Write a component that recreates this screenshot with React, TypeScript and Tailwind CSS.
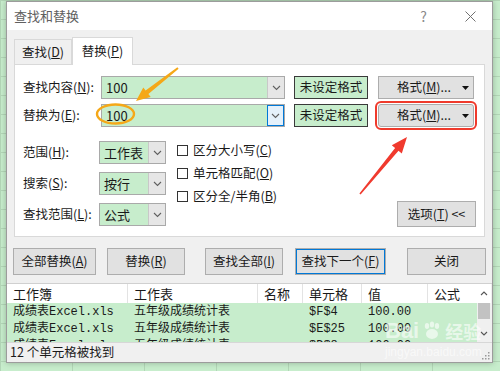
import React from "react";

const ui = { fontFamily: '"Noto Sans CJK SC", "Noto Sans", sans-serif' };
const mono = { fontFamily: '"Liberation Mono", "Noto Sans CJK SC", monospace' };

function Chevron() {
  return (
    <svg width="9" height="6" viewBox="0 0 9 6">
      <path d="M1 1 L4.5 4.5 L8 1" fill="none" stroke="#606060" strokeWidth="1.1" />
    </svg>
  );
}

function Combo({ value, width, focus }: { value: string; width: string; focus?: boolean }) {
  return (
    <div className={`flex h-full ${width} border border-[#a9a9a9] bg-[#c7edcc]`}>
      <div className="flex-1 flex items-center pl-[4px] text-[13px] text-[#1a1a1a]">{value}</div>
      <div
        className={`w-[17px] flex items-center justify-center ${
          focus ? "border border-[#0078d7] bg-[#e5f1fb]" : "border-l border-[#c8c8c8] bg-[#e6e6e6]"
        }`}
      >
        <Chevron />
      </div>
    </div>
  );
}

function Btn({ children, className }: { children: React.ReactNode; className?: string }) {
  return (
    <div
      className={`flex items-center justify-center border border-[#adadad] bg-[#e1e1e1] text-[12.5px] text-[#1a1a1a] ${className}`}
    >
      {children}
    </div>
  );
}

function FormatBtn({ marked }: { marked?: boolean }) {
  return (
    <div
      className={`relative flex items-center justify-center w-[96px] h-[23px] border border-[#adadad] bg-[#e1e1e1] text-[12.5px] text-[#1a1a1a] ${
        marked ? "outline-2 outline-offset-[1px] outline-[#ef3a2c] rounded-[3px]" : ""
      }`}
    >
      <span className="ml-[-4px]">
        格式(<u>M</u>)...
      </span>
      <svg className="absolute right-[4px] top-[9px]" width="7" height="4" viewBox="0 0 7 4">
        <path d="M0 0 H7 L3.5 4 Z" fill="#111" />
      </svg>
    </div>
  );
}

function Check({ children }: { children: React.ReactNode }) {
  return (
    <div className="flex items-center h-[23px] text-[12.5px] text-[#1a1a1a]">
      <div className="w-[11px] h-[11px] border border-[#333] bg-white mr-[5px]" />
      {children}
    </div>
  );
}

const cols = ["w-[121px]", "w-[130px]", "w-[45px]", "w-[59px]", "w-[66px]", "w-[49px]"];

const rows = [
  ["成绩表Excel.xls", "五年级成绩统计表", "", "$F$4", "100.00", ""],
  ["成绩表Excel.xls", "五年级成绩统计表", "", "$E$25", "100.00", ""],
  ["成绩表Excel.xls", "五年级成绩统计表", "", "$D$8", "100.00", ""],
];

export default function App() {
  return (
    <div
      className="relative w-[500px] h-[371px] overflow-hidden bg-[#c7edcc] bg-[linear-gradient(#b3d6b7_1px,transparent_1px),linear-gradient(90deg,#b3d6b7_1px,transparent_1px)] bg-[size:72px_19px]"
      style={ui}
    >
      <div className="ml-[6px] mt-[1px] w-[487px] h-[362px] border border-[#9c9c9c] bg-[#f0f0f0] flex flex-col shadow-[0_0_6px_rgba(0,0,0,0.25)]">
        {/* title bar */}
        <div className="h-[28px] shrink-0 bg-white flex items-center pl-[7px] pr-[16px] text-[13px] text-[#606060]">
          <span>查找和替换</span>
          <span className="ml-auto text-[14px] text-[#8a8a8a] mr-[38px]">?</span>
          <svg width="11" height="11" viewBox="0 0 11 11">
            <path d="M0.5 0.5 L10.5 10.5 M10.5 0.5 L0.5 10.5" stroke="#707070" strokeWidth="1" />
          </svg>
        </div>

        {/* tabs */}
        <div className="flex items-end h-[34px] pl-[7px] shrink-0">
          <div className="w-[58px] h-[25px] border border-b-0 border-[#d9d9d9] bg-[#f0f0f0] flex items-center justify-center text-[12.5px] text-[#1a1a1a]">
            查找(<u>D</u>)
          </div>
          <div className="relative z-10 -mb-px w-[61px] h-[28px] border border-b-0 border-[#d9d9d9] bg-white flex items-center justify-center text-[12.5px] text-[#1a1a1a]">
            替换(<u>P</u>)
          </div>
        </div>

        {/* panel */}
        <div className="mx-[7px] h-[173px] shrink-0 border border-[#d9d9d9] bg-white pt-[11px] pl-[8px] pr-[8px] text-[#1a1a1a]">
          <div className="flex items-center h-[23px]">
            <div className="w-[78px] text-[12.5px]">
              查找内容(<u>N</u>):
            </div>
            <Combo value="100" width="w-[184px]" />
            <div className="ml-[9px] w-[74px] h-full border border-[#3a3a3a] bg-[#c7edcc] flex items-center justify-center text-[12.5px]">
              未设定格式
            </div>
            <div className="ml-[10px]">
              <FormatBtn />
            </div>
          </div>
          <div className="flex items-center h-[23px] mt-[5px]">
            <div className="w-[78px] text-[12.5px]">
              替换为(<u>E</u>):
            </div>
            <Combo value="100" width="w-[184px]" focus />
            <div className="ml-[9px] w-[74px] h-full border border-[#3a3a3a] bg-[#c7edcc] flex items-center justify-center text-[12.5px]">
              未设定格式
            </div>
            <div className="ml-[10px]">
              <FormatBtn marked />
            </div>
          </div>

          <div className="flex mt-[14px]">
            <div className="flex flex-col gap-[8px]">
              {[
                ["范围(", "H", "):", "工作表"],
                ["搜索(", "S", "):", "按行"],
                ["查找范围(", "L", "):", "公式"],
              ].map((r) => (
                <div key={r[0]} className="flex items-center h-[23px]">
                  <div className="w-[76px] text-[12.5px]">
                    {r[0]}
                    <u>{r[1]}</u>
                    {r[2]}
                  </div>
                  <Combo value={r[3]} width="w-[67px]" />
                </div>
              ))}
            </div>
            <div className="ml-[11px] mt-[-2px] flex flex-col">
              <Check>
                区分大小写(<u>C</u>)
              </Check>
              <Check>
                单元格匹配(<u>O</u>)
              </Check>
              <Check>
                区分全/半角(<u>B</u>)
              </Check>
            </div>
            <div className="ml-auto flex items-end">
              <Btn className="w-[79px] h-[26px] mb-[-1px]">
                选项(<u>T</u>)&nbsp;&lt;&lt;
              </Btn>
            </div>
          </div>
        </div>

        {/* action buttons */}
        <div className="flex h-[27px] mt-[11px] shrink-0">
          <Btn className="ml-[6px] w-[83px]">
            全部替换(<u>A</u>)
          </Btn>
          <Btn className="ml-[11px] w-[78px]">
            替换(<u>R</u>)
          </Btn>
          <Btn className="ml-[20px] w-[78px]">
            查找全部(<u>I</u>)
          </Btn>
          <Btn className="ml-[12px] w-[91px] border-[#0078d7] outline outline-[#0078d7] -outline-offset-2">
            查找下一个(<u>F</u>)
          </Btn>
          <Btn className="ml-[21px] w-[79px]">关闭</Btn>
        </div>

        {/* results table */}
        <div className="mt-[8px] flex shrink-0 border-t border-[#d0d0d0]">
          <div className="flex flex-col">
            <div className="flex h-[19px] bg-white text-[13px] text-[#1a1a1a]">
              {["工作簿", "工作表", "名称", "单元格", "值", "公式"].map((h, i) => (
                <div
                  key={h}
                  className={`${cols[i]} pl-[6px] flex items-center ${i < 5 ? "border-r border-[#e3e3e3]" : ""}`}
                >
                  {h}
                </div>
              ))}
            </div>
            <div className="h-[39px] overflow-hidden bg-[#c7edcc]">
              {rows.map((r, ri) => (
                <div key={ri} className="flex h-[17px] text-[12px] text-[#1a1a1a]" style={mono}>
                  {r.map((c, i) => (
                    <div key={i} className={`${cols[i]} pl-[6px] flex items-center whitespace-nowrap overflow-hidden`}>
                      {c}
                    </div>
                  ))}
                </div>
              ))}
            </div>
          </div>
          <div className="w-[14px] flex flex-col bg-[#f0f0f0]">
            <div className="h-[19px] flex items-center justify-center bg-white">
              <svg width="8" height="5" viewBox="0 0 8 5">
                <path d="M1 4 L4 1 L7 4" fill="none" stroke="#555" strokeWidth="1.1" />
              </svg>
            </div>
            <div className="h-[16px] mx-[1px] bg-[#c2c2c2]" />
            <div className="flex-1 flex items-end justify-center pb-[6px]">
              <svg width="8" height="5" viewBox="0 0 8 5">
                <path d="M1 1 L4 4 L7 1" fill="none" stroke="#555" strokeWidth="1.1" />
              </svg>
            </div>
          </div>
        </div>

        {/* status bar */}
        <div className="flex-1 flex items-center pl-[3px] border-t border-[#d7d7d7] bg-[#f0f0f0] text-[12.5px] text-[#1a1a1a] relative">
          12 个单元格被找到
          <svg className="absolute right-[2px] bottom-[2px]" width="8" height="8" viewBox="0 0 8 8">
            <g fill="#9a9a9a">
              <rect x="6" y="0" width="1.5" height="1.5" />
              <rect x="3" y="3" width="1.5" height="1.5" />
              <rect x="6" y="3" width="1.5" height="1.5" />
              <rect x="0" y="6" width="1.5" height="1.5" />
              <rect x="3" y="6" width="1.5" height="1.5" />
              <rect x="6" y="6" width="1.5" height="1.5" />
            </g>
          </svg>
        </div>
      </div>

      {/* watermark */}
      <div className="absolute left-[385px] top-[320px] pointer-events-none text-white/60 leading-none">
        <div className="flex items-center gap-[3px]">
          <span className="text-[22px] font-bold" style={{ fontFamily: '"Liberation Sans", sans-serif' }}>
            Bai
          </span>
          <svg width="20" height="20" viewBox="0 0 20 20">
            <g fill="rgba(255,255,255,0.6)">
              <ellipse cx="5" cy="5" rx="2.2" ry="3" />
              <ellipse cx="10" cy="3.5" rx="2.2" ry="3" />
              <ellipse cx="15" cy="5" rx="2.2" ry="3" />
              <ellipse cx="10" cy="13" rx="6" ry="5" />
            </g>
          </svg>
          <span className="text-[18px] font-bold">经验</span>
        </div>
        <div className="mt-[4px] text-[12px]" style={{ fontFamily: '"Liberation Sans", sans-serif' }}>
          jingyan.baidu.com
        </div>
      </div>

      {/* annotations */}
      <svg className="absolute inset-0 pointer-events-none" width="500" height="371" viewBox="0 0 500 371">
        <polygon
          points="178.6,68.7 148.4,94 150.7,97 136,101 143.3,87.6 145.6,90.6 177.4,67.3"
          fill="#f5a818"
        />
        <ellipse cx="115.5" cy="114" rx="18.5" ry="9.5" fill="none" stroke="#f5a818" strokeWidth="2.4" />
        <polygon
          points="360.6,194.5 398.5,150.7 401.8,153.4 407,137 391.8,145.2 395.1,147.9 359.4,193.5"
          fill="#f03a2e"
        />
      </svg>
    </div>
  );
}
